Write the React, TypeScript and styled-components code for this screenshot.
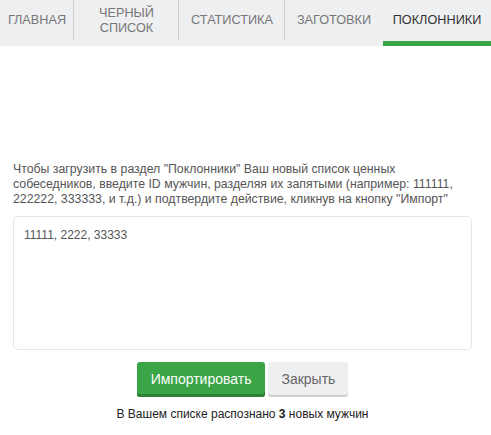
import styled, { createGlobalStyle } from "styled-components";

const GlobalStyle = createGlobalStyle`
  body {
    margin: 0;
    background-color: white;
    font-family: "Liberation Sans", Arial, sans-serif;
  }
`;

const Wrapper = styled.div`
  width: 491px;
  height: 435px;
  display: flex;
  flex-direction: column;
`;

const Tabs = styled.div`
  display: flex;
  height: 46px;
  background-color: #eeeff1;
`;

const Tab = styled.div<{ $w: number; $active?: boolean; $last?: boolean }>`
  position: relative;
  width: ${(p) => p.$w}px;
  height: 46px;
  box-sizing: border-box;
  display: flex;
  align-items: center;
  justify-content: center;
  text-align: center;
  padding-bottom: 5px;
  font-size: 12.7px;
  line-height: 15px;
  color: ${(p) => (p.$active ? "#333" : "#777")};
  border-bottom: 5px solid ${(p) => (p.$active ? "#3aa447" : "transparent")};
  padding-top: 5px;
  &::after {
    content: "";
    display: ${(p) => (p.$last ? "none" : "block")};
    position: absolute;
    right: 0;
    top: 0;
    width: 1px;
    height: 40px;
    background-color: #cfd0d2;
  }
`;

const Content = styled.div`
  display: flex;
  flex-direction: column;
  padding: 116px 19px 0 13px;
`;

const Hint = styled.p`
  margin: 0;
  font-size: 12.3px;
  line-height: 15px;
  color: #555;
`;

const Field = styled.textarea`
  margin-top: 9px;
  width: 459px;
  height: 134px;
  box-sizing: border-box;
  border: 1px solid #e6e6e6;
  border-radius: 5px;
  padding: 11px 10px;
  font-family: "Liberation Sans", Arial, sans-serif;
  font-size: 12px;
  color: #555;
  resize: none;
  outline: none;
`;

const Buttons = styled.div`
  display: flex;
  justify-content: center;
  align-items: flex-start;
  gap: 3px;
  margin-top: 12px;
`;

const Button = styled.button<{ $primary?: boolean }>`
  height: ${(p) => (p.$primary ? 35 : 33)}px;
  padding: 0 ${(p) => (p.$primary ? 14 : 13)}px;
  border: none;
  border-radius: 3px;
  font-family: "Liberation Sans", Arial, sans-serif;
  font-size: 14px;
  cursor: pointer;
  color: ${(p) => (p.$primary ? "white" : "#666")};
  background-color: ${(p) => (p.$primary ? "#3aa447" : "#eeeff1")};
  box-shadow: ${(p) =>
    p.$primary ? "inset 0 -3px 0 #2c8236" : "0 2px 0 #cfd0d2"};
  padding-bottom: ${(p) => (p.$primary ? 2 : 0)}px;
`;

const Result = styled.p`
  margin: 10px 0 0;
  text-align: center;
  font-size: 12px;
  color: #222;
  b {
    font-weight: bold;
  }
`;

const tabs = [
  { title: "ГЛАВНАЯ", w: 74 },
  { title: "ЧЕРНЫЙ\nСПИСОК", w: 105 },
  { title: "СТАТИСТИКА", w: 106 },
  { title: "ЗАГОТОВКИ", w: 98 },
  { title: "ПОКЛОННИКИ", w: 108, active: true },
];

const App = () => {
  return (
    <Wrapper>
      <GlobalStyle />
      <Tabs>
        {tabs.map((t, i) => (
          <Tab key={t.title} $w={t.w} $active={t.active} $last={i >= 3}>
            <span style={{ whiteSpace: "pre-line" }}>{t.title}</span>
          </Tab>
        ))}
      </Tabs>
      <Content>
        <Hint>
          Чтобы загрузить в раздел "Поклонники" Ваш новый список ценных
          собеседников, введите ID мужчин, разделяя их запятыми (например:
          111111, 222222, 333333, и т.д.) и подтвердите действие, кликнув на
          кнопку "Импорт"
        </Hint>
        <Field defaultValue="11111, 2222, 33333" />
        <Buttons>
          <Button $primary>Импортировать</Button>
          <Button>Закрыть</Button>
        </Buttons>
        <Result>
          В Вашем списке распознано <b>3</b> новых мужчин
        </Result>
      </Content>
    </Wrapper>
  );
};

export default App;
